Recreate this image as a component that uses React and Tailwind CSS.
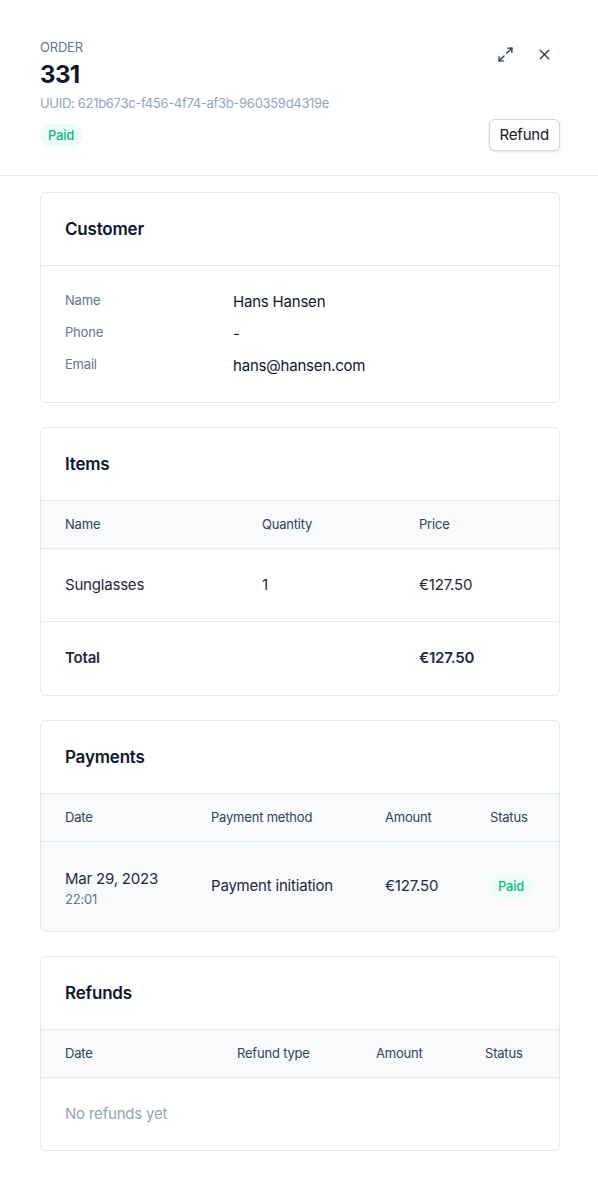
import React from 'react'
import { Maximize2, X } from 'lucide-react'

const PaidBadge = () => (
  <span className="inline-flex items-center rounded-full bg-[#ecfdf5] px-2 py-[3px] text-[13px] leading-[17px] font-medium text-[#10b981]">Paid</span>
)

const Card = ({ title, children }) => (
  <div className="bg-white border border-[#e2e8f0] rounded-md overflow-hidden">
    <div className="px-6 py-6 border-b border-[#e2e8f0]">
      <h2 className="text-[17px] leading-6 font-semibold text-[#0f172a]">{title}</h2>
    </div>
    {children}
  </div>
)

const HeadRow = ({ cols, cells }) => (
  <div className={`grid ${cols} items-center px-6 h-12 bg-[#f8fafc] border-b border-[#e2e8f0] text-[13px] text-[#334155]`}>
    {cells.map(c => <span key={c}>{c}</span>)}
  </div>
)

const App = () => (
  <div className="bg-white text-[#0f172a] tracking-[-0.2px]" style={{ fontFamily: 'Inter, "Noto Sans", sans-serif' }}>
    <div className="pl-10 pr-[38px] pt-9 pb-6 border-b border-[#e2e8f0]">
      <div className="flex items-start justify-between">
        <div>
          <p className="text-[13px] leading-5 mt-px uppercase text-[#64748b]">Order</p>
          <p className="text-[24px] leading-9 font-bold tracking-tight">331</p>
          <p className="text-[13px] leading-5 text-[#94a3b8] tracking-[-0.3px]">UUID: 621b673c-f456-4f74-af3b-960359d4319e</p>
        </div>
        <div className="flex items-center gap-[22px] mt-[10px] mr-[7px] text-[#334155]">
          <Maximize2 size={17} strokeWidth={2} />
          <X size={17} strokeWidth={2} />
        </div>
      </div>
      <div className="flex items-center justify-between mt-1.5">
        <PaidBadge />
        <button className="h-8 px-2.5 rounded-md border border-[#cbd5e1] shadow-sm text-[15px] text-[#0f172a] bg-white">Refund</button>
      </div>
    </div>

    <div className="pl-10 pr-[38px] pt-4 pb-6 space-y-6">
      <Card title="Customer">
        <div className="px-6 py-6 space-y-2">
          {[['Name', 'Hans Hansen'], ['Phone', '-'], ['Email', 'hans@hansen.com']].map(([k, v]) => (
            <div key={k} className="grid grid-cols-[168px_1fr] items-start">
              <span className="text-[13px] leading-5 text-[#64748b]">{k}</span>
              <span className="text-[15px] leading-6 text-[#0f172a]">{v}</span>
            </div>
          ))}
        </div>
      </Card>

      <Card title="Items">
        <HeadRow cols="grid-cols-[197px_157px_1fr]" cells={['Name', 'Quantity', 'Price']} />
        <div className="grid grid-cols-[197px_157px_1fr] items-center px-6 h-[73px] border-b border-[#e2e8f0] text-[15px] text-[#1e293b]">
          <span>Sunglasses</span>
          <span>1</span>
          <span>€127.50</span>
        </div>
        <div className="grid grid-cols-[197px_157px_1fr] items-center px-6 h-[73px] text-[15px] font-semibold text-[#1e293b]">
          <span>Total</span>
          <span></span>
          <span>€127.50</span>
        </div>
      </Card>

      <Card title="Payments">
        <HeadRow cols="grid-cols-[146px_174px_105px_1fr]" cells={['Date', 'Payment method', 'Amount', 'Status']} />
        <div className="grid grid-cols-[146px_174px_105px_1fr] items-center px-6 h-[89px] bg-[#f8fafc] text-[15px] text-[#1e293b]">
          <div className="flex flex-col">
            <span className="leading-6">Mar 29, 2023</span>
            <span className="text-[13px] leading-4 text-[#64748b]">22:01</span>
          </div>
          <span>Payment initiation</span>
          <span>€127.50</span>
          <span><PaidBadge /></span>
        </div>
      </Card>

      <Card title="Refunds">
        <HeadRow cols="grid-cols-[172px_139px_109px_1fr]" cells={['Date', 'Refund type', 'Amount', 'Status']} />
        <div className="px-6 h-[72px] flex items-center text-[15px] text-[#94a3b8]">No refunds yet</div>
      </Card>
    </div>
  </div>
)

export default App
